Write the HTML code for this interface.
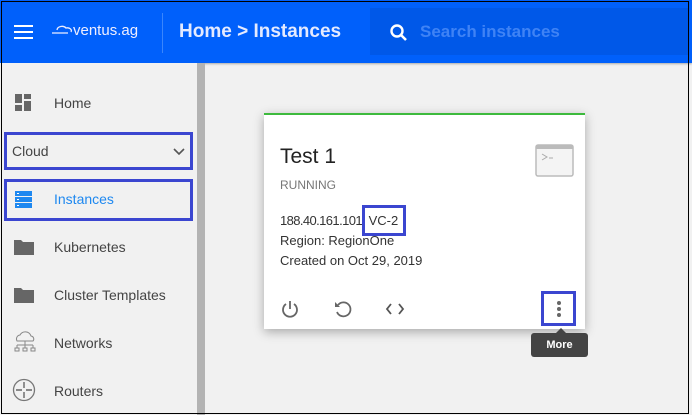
<!DOCTYPE html><html><head><style>
*{box-sizing:border-box;margin:0;padding:0}
body{width:692px;height:415px;overflow:hidden;background:#f1f1f1;font-family:"Liberation Sans",sans-serif;position:relative}
.frame{position:absolute;left:1px;top:1px;width:688px;height:413px;border:1px solid #000;z-index:10;pointer-events:none}
.hdr{position:absolute;left:0;top:0;width:692px;height:63px;background:#0060fb;box-shadow:0 1px 2px rgba(0,0,0,.3)}
.side{position:absolute;left:0;top:63px;width:197px;height:352px;background:#f1f1f1}
.sb{position:absolute;left:197px;top:63px;width:8px;height:352px;background:#b3b3b3}
.item{position:absolute;left:54px;font-size:14px;color:#444}
.ico{position:absolute;left:12px}
.box{position:absolute;border:3px solid #3b46d0}
.card{position:absolute;left:264px;top:113px;width:321px;height:216px;background:#fff;border-top:2px solid #3dba3d;box-shadow:0 3px 10px rgba(0,0,0,.3)}
</style></head><body>
<div class="hdr">
<div style="position:absolute;left:14px;top:25px;width:19px;height:2px;background:#fff;box-shadow:0 6px 0 #fff,0 12px 0 #fff"></div>
<div style="position:absolute;left:51px;top:22px;color:#eef;font-size:15px">
<svg width="22" height="14" style="vertical-align:-1px" viewBox="0 0 22 14"><path d="M1 11h16M6 8a5 4 0 0 1 9-2a4 3 0 0 1 5 4" stroke="#eef" fill="none" stroke-width="1.3"/></svg>ventus.ag</div>
<div style="position:absolute;left:162px;top:13px;width:1px;height:40px;background:#3a86fc"></div>
<div style="position:absolute;left:179px;top:21px;color:#e4eaff;font-size:19px;font-weight:bold">Home &gt; Instances</div>
<div style="position:absolute;left:370px;top:8px;width:319px;height:47px;background:#0058e8">
<svg style="position:absolute;left:19px;top:15px" width="20" height="20" viewBox="0 0 20 20"><circle cx="8" cy="8" r="5.5" stroke="#fff" stroke-width="2.4" fill="none"/><path d="M12 12l5 5" stroke="#fff" stroke-width="2.6"/></svg>
<div style="position:absolute;left:50px;top:14px;font-size:17px;font-weight:bold;color:#3f83f5">Search instances</div></div>
</div>
<div class="side">
<svg class="ico" style="top:30px" width="22" height="20"><rect x="3" y="1" width="7" height="9" fill="#666"/><rect x="12" y="1" width="7" height="5" fill="#666"/><rect x="3" y="12" width="7" height="6" fill="#666"/><rect x="12" y="8" width="7" height="10" fill="#666"/></svg>
<div class="item" style="top:32px">Home</div>
<div class="box" style="left:4px;top:69px;width:189px;height:38px"></div>
<div style="position:absolute;left:12px;top:80px;font-size:14px;color:#444">Cloud</div>
<svg style="position:absolute;left:172px;top:84px" width="14" height="9"><path d="M2 2l5 5 5-5" stroke="#555" stroke-width="1.6" fill="none"/></svg>
<div class="box" style="left:4px;top:116px;width:189px;height:42px"></div>
<svg class="ico" style="top:127px" width="22" height="20"><rect x="3" y="1" width="17" height="5" fill="#1e88f0"/><rect x="3" y="7" width="17" height="5" fill="#1e88f0"/><rect x="3" y="13" width="17" height="5" fill="#1e88f0"/><rect x="5" y="3" width="2" height="1" fill="#fff"/><rect x="5" y="9" width="2" height="1" fill="#fff"/><rect x="5" y="15" width="2" height="1" fill="#fff"/></svg>
<div class="item" style="top:128px;color:#1e88f0">Instances</div>
<svg class="ico" style="top:174px" width="24" height="20"><path d="M2 3h7l2 2h11v13H2z" fill="#666"/></svg>
<div class="item" style="top:176px">Kubernetes</div>
<svg class="ico" style="top:222px" width="24" height="20"><path d="M2 3h7l2 2h11v13H2z" fill="#666"/></svg>
<div class="item" style="top:224px">Cluster Templates</div>
<svg class="ico" style="top:266px" width="26" height="26" viewBox="0 0 26 26"><path d="M5 12a4 4 0 0 1 3-6a6 6 0 0 1 11 1a3 3 0 0 1 2 5zM13 12v4M5 16h16M5 16v3M13 16v3M21 16v3" stroke="#888" fill="none"/><rect x="3" y="19" width="4" height="3" stroke="#888" fill="none"/><rect x="11" y="19" width="4" height="3" stroke="#888" fill="none"/><rect x="19" y="19" width="4" height="3" stroke="#888" fill="none"/></svg>
<div class="item" style="top:272px">Networks</div>
<svg class="ico" style="top:315px" width="26" height="26" viewBox="0 0 26 26"><circle cx="12" cy="12" r="10.5" stroke="#777" fill="none" stroke-width="1.3"/><path d="M12 4v6M12 14v6M4 12h6M14 12h6" stroke="#666" stroke-width="1.4"/></svg>
<div class="item" style="top:320px">Routers</div>
</div>
<div class="sb"></div>
<div class="card">
<div style="position:absolute;left:16px;top:30px;font-size:21px;color:#222">Test 1</div>
<div style="position:absolute;left:16px;top:63px;font-size:12px;color:#777">RUNNING</div>
<svg style="position:absolute;left:271px;top:29px" width="40" height="34"><rect x="1" y="1" width="37" height="31" rx="2" fill="#f4f4f4" stroke="#bbb" stroke-width="1.5"/><rect x="1" y="1" width="37" height="4" fill="#bbb"/><path d="M7 10l5 3-5 3M14 14h4" stroke="#aaa" fill="none"/></svg>
<div style="position:absolute;left:16px;top:96px;font-size:13px;color:#333;line-height:20px"><span style="letter-spacing:-0.6px">188.40.161.101,</span> VC-2<br>Region: RegionOne<br>Created on Oct 29, 2019</div>
<div class="box" style="left:98px;top:90px;width:44px;height:31px"></div>
<svg style="position:absolute;left:16px;top:184px" width="20" height="20"><path d="M6 5a7 7 0 1 0 8 0M10 2v8" stroke="#666" stroke-width="1.8" fill="none"/></svg>
<svg style="position:absolute;left:68px;top:184px" width="22" height="20"><path d="M6 6a7 7 0 1 1-1 7" stroke="#666" stroke-width="1.8" fill="none"/><path d="M3 3v5h5z" fill="#666"/></svg>
<svg style="position:absolute;left:120px;top:186px" width="22" height="16"><path d="M7 3l-4 5 4 5M15 3l4 5-4 5" stroke="#555" stroke-width="1.8" fill="none"/></svg>
<div class="box" style="left:277px;top:176px;width:35px;height:35px"></div>
<div style="position:absolute;left:293px;top:186px;width:4px;height:4px;border-radius:2px;background:#666;box-shadow:0 6px 0 #666,0 12px 0 #666"></div>
</div>
<div style="position:absolute;left:555px;top:328px;border:6px solid transparent;border-bottom-color:#444;border-top:0"></div>
<div style="position:absolute;left:531px;top:333px;width:57px;height:24px;background:#444;border-radius:3px;color:#fff;font-size:11px;font-weight:bold;text-align:center;line-height:24px">More</div>
<div class="frame"></div>
</body></html>
